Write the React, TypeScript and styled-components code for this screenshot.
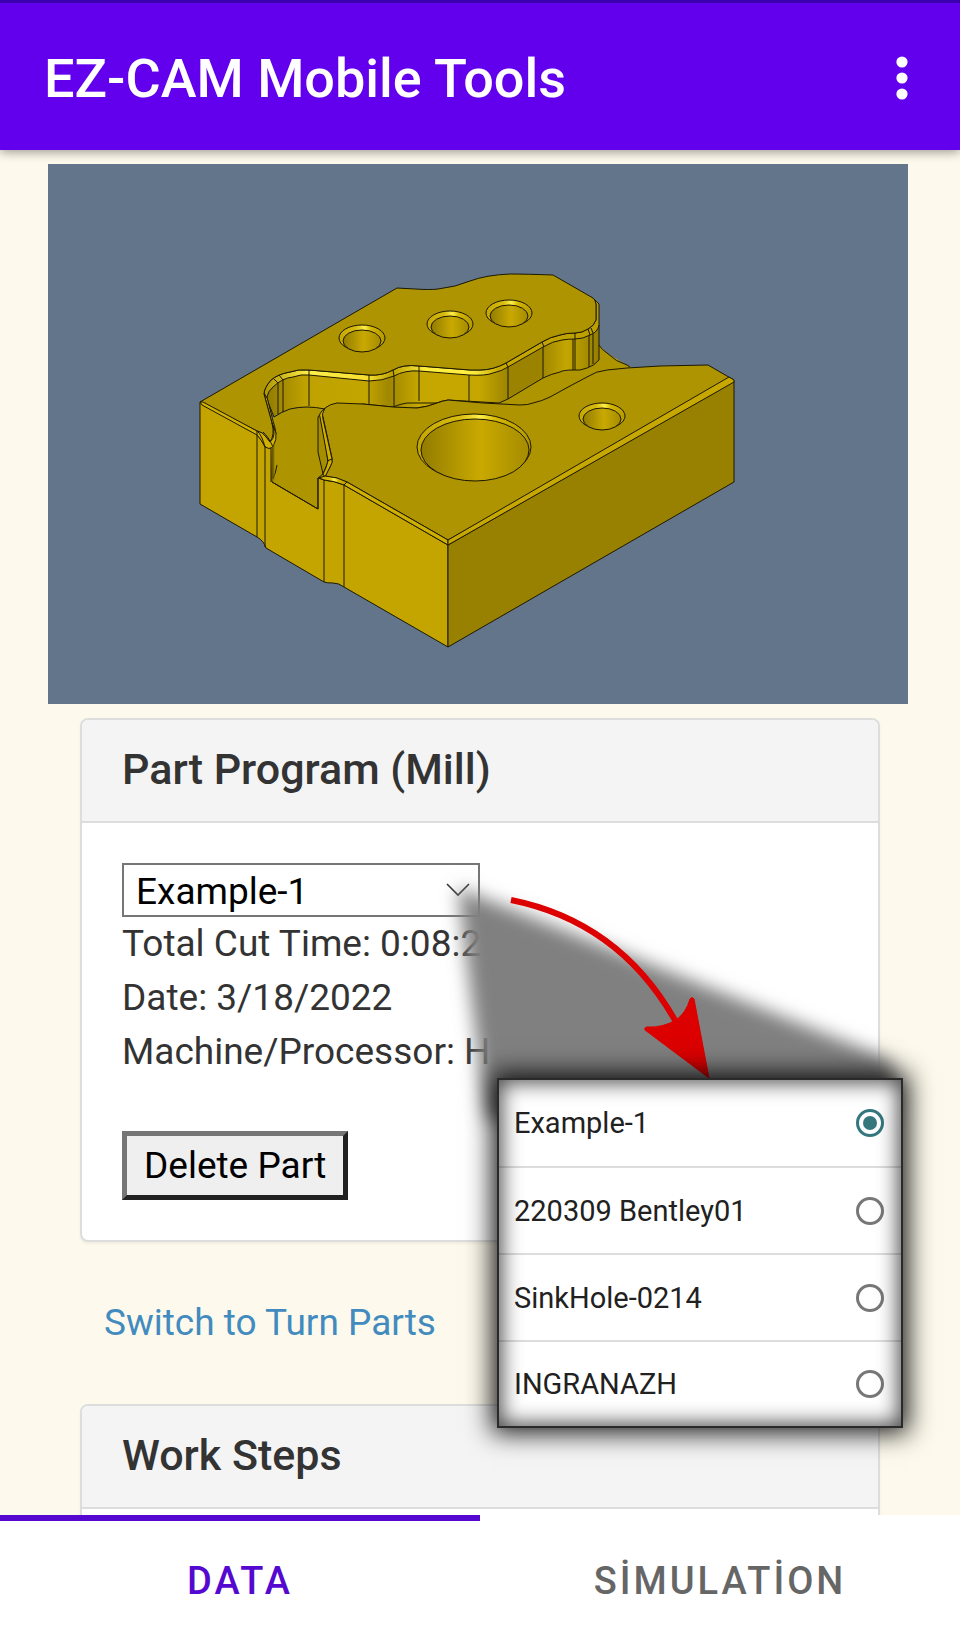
import React, { useState } from 'react';
import styled, { createGlobalStyle } from 'styled-components';

const GlobalStyle = createGlobalStyle`
  *, *::before, *::after { box-sizing: border-box; }
  body {
    margin: 0;
    background: #fdf9ec;
    color: #333;
    font-family: Roboto, "Liberation Sans", sans-serif;
    font-size: 37px;
    line-height: 54px;
  }
  button, select, input { font: inherit; margin: 0; }
`;

const Page = styled.div`
  display: flex;
  flex-direction: column;
  min-height: 100vh;
  overflow: hidden;
`;

const AppBar = styled.header`
  display: flex;
  align-items: center;
  justify-content: space-between;
  min-height: 150px;
  padding: 4px 44px 0;
  border-top: 3px solid #3a00b0;
  background: #6200ee;
  color: #fff;
  box-shadow: 0 2px 10px rgba(0, 0, 0, 0.4);
  z-index: 1;
`;

const AppTitle = styled.h1`
  margin: 0;
  font-size: 54px;
  font-weight: 500;
  line-height: 64px;
`;

const MenuButton = styled.button`
  display: flex;
  padding: 0 8px 0;
  border: 0;
  background: none;
  color: inherit;
`;

const Content = styled.main`
  flex: 1;
  display: flex;
  flex-direction: column;
  padding-top: 14px;
`;

const Viewport = styled.div`
  margin: 0 52px 14px 48px;
  background: #62758b;
  svg { display: block; width: 100%; height: auto; }
`;

const Card = styled.section<{ $open?: boolean }>`
  margin: 0 80px;
  border: 2px solid #ddd;
  border-radius: 8px;
  background: #fff;
  box-shadow: 0 2px 3px rgba(0, 0, 0, 0.05);
  ${p => p.$open && 'flex: 1; border-bottom: 0; border-radius: 8px 8px 0 0;'}
`;

const CardTitle = styled.h2`
  margin: 0;
  padding: 23px 40px 25px;
  border-bottom: 2px solid #ddd;
  border-radius: 6px 6px 0 0;
  background: #f4f4f4;
  font-size: 43px;
  font-weight: 500;
  line-height: 53px;
`;

const CardBody = styled.div`
  padding: 40px;
`;

const Field = styled.div`
  position: relative;
  width: 358px;
`;

const Select = styled.select`
  display: block;
  width: 100%;
  height: 54px;
  padding: 0 48px 0 12px;
  border: 2px solid #767676;
  border-radius: 0;
  background: #fff;
  color: #000;
  appearance: none;
`;

const Chevron = styled.svg`
  position: absolute;
  top: 20px;
  right: 10px;
  pointer-events: none;
`;

const Callout = styled.svg`
  position: absolute;
  top: -23px;
  left: 278px;
  pointer-events: none;
  z-index: 2;
`;

const Popup = styled.fieldset`
  position: absolute;
  top: 215px;
  left: 375px;
  width: 406px;
  margin: 0;
  padding: 0;
  border: 2px solid #2a2a2a;
  background: #fff;
  color: #212121;
  font-size: 29px;
  line-height: 36px;
  box-shadow: 0 0 24px 5px rgba(0, 0, 0, 0.9);
  z-index: 3;
  &::after {
    content: '';
    position: absolute;
    inset: 0;
    box-shadow: inset 0 0 20px 3px rgba(0, 0, 0, 0.7);
    pointer-events: none;
  }
`;

const Option = styled.label`
  display: flex;
  align-items: center;
  justify-content: space-between;
  height: 86px;
  padding: 0 17px 0 15px;
  & + & { height: 87px; border-top: 2px solid #ddd; }
  & + &:last-child { height: 86px; }
`;

const Radio = styled.input`
  width: 28px;
  height: 28px;
  border: 3px solid #777;
  border-radius: 50%;
  appearance: none;
  &:checked {
    border-color: #34787d;
    background: #34787d;
    background-clip: content-box;
    padding: 4px;
  }
`;

const Details = styled.p`
  margin: 0 0 52px;
  span { display: block; white-space: nowrap; }
`;

const DeleteButton = styled.button`
  display: block;
  height: 69px;
  padding: 0 17px;
  border: 5px solid;
  border-color: #767676 #212121 #212121 #767676;
  border-radius: 0;
  background: #efefef;
  color: #000;
`;

const SwitchLink = styled.a`
  align-self: flex-start;
  margin: 54px 104px 54px;
  color: #428bbf;
  text-decoration: none;
`;

const TabBar = styled.nav`
  display: flex;
  background: #fff;
  z-index: 1;
`;

const Tab = styled.button<{ $active?: boolean }>`
  flex: 1;
  height: 128px;
  padding: 0 0 2px;
  border: 0;
  border-top: 6px solid ${p => (p.$active ? '#5508d0' : 'transparent')};
  background: none;
  color: ${p => (p.$active ? '#5508d0' : '#666')};
  font-size: 38px;
  font-weight: 500;
  letter-spacing: 3px;
`;

const holes = [[362, 338], [450, 324], [509, 313], [602, 416]];

const PartModel = () => (
  <svg viewBox="48 164 860 540" role="img" aria-label="Milled part preview" stroke="#1d1800" strokeWidth="1" strokeLinejoin="round" fill="none">
    <defs>
      <linearGradient id="bore" x1="0" x2="1" y1="0" y2="0">
        <stop offset="0" stopColor="#927c00" />
        <stop offset="0.55" stopColor="#c9a900" />
        <stop offset="1" stopColor="#a58c00" />
      </linearGradient>
      <linearGradient id="rim" x1="0" x2="1" y1="0" y2="0">
        <stop offset="0" stopColor="#c4a600" />
        <stop offset="0.38" stopColor="#d9bc10" />
        <stop offset="0.55" stopColor="#fff04a" />
        <stop offset="0.7" stopColor="#d4b600" />
        <stop offset="1" stopColor="#b39900" />
      </linearGradient>
      <linearGradient id="wall" gradientUnits="userSpaceOnUse" x1="265" x2="600" y1="0" y2="0">
        <stop offset="0" stopColor="#8f7a00" />
        <stop offset="0.12" stopColor="#bfa100" />
        <stop offset="0.3" stopColor="#c4a600" />
        <stop offset="0.37" stopColor="#9f8700" />
        <stop offset="0.46" stopColor="#c5a700" />
        <stop offset="0.64" stopColor="#c5a700" />
        <stop offset="0.73" stopColor="#9b8300" />
        <stop offset="0.82" stopColor="#9b8300" />
        <stop offset="0.9" stopColor="#c4a600" />
        <stop offset="1" stopColor="#937d00" />
      </linearGradient>
      <linearGradient id="edge" gradientUnits="userSpaceOnUse" x1="265" x2="600" y1="0" y2="0">
        <stop offset="0" stopColor="#b09600" />
        <stop offset="0.13" stopColor="#fff04a" />
        <stop offset="0.31" stopColor="#f5de30" />
        <stop offset="0.38" stopColor="#bb9f00" />
        <stop offset="0.48" stopColor="#ffee40" />
        <stop offset="0.62" stopColor="#ffee40" />
        <stop offset="0.7" stopColor="#c6a800" />
        <stop offset="1" stopColor="#bb9f00" />
      </linearGradient>
    </defs>

    {/* channel floor */}
    <path fill="#ae9500" stroke="none" d="M272 418L290 409L325 405L400 380H540L599 345L607 353L627 365L640 372L600 400L480 420L335 480L318 509L272 482Z" />
    <path d="M599 345Q602 350 607 353Q616 362 627 365L630 367" />

    {/* island wall and chamfer */}
    <path fill="url(#wall)" d="M599 325V360Q594 366 587 368Q580 371 573 370Q563 370 560 372Q551 374 543 378L508 399L499 403L448 400Q441 401 437 403Q427 407 417 408Q401 409 393 407L363 404L325 409Q315 407 307 407Q298 407 290 409Q281 412 274 417L266 397L268 389L276 380L293 374L309 372L369 378L400 370L480 372L560 338Z" />
    <path d="M393 407Q400 404 407 403H437M278 383V414M283 380V412M309 375V406M369 381V404M394 376V406M419 371V401M469 375V402M508 367V399M543 347V378M573 339V370M575 339V370M589 335V367M593 333V364" />
    <path fill="url(#edge)" d="M596 320Q594 326 588 329Q582 333 575 333Q566 333 560 335Q550 337 542 342L506 363Q493 370 480 370H470L419 366Q403 364 393 370Q382 376 369 375L309 370Q298 369 290 372Q278 374 271 380Q264 388 264 394L272 423L276 434Q275 426 273 421L267 397Q268 391 273 387Q282 378 293 377Q301 374 309 375L369 381Q382 381 394 376Q405 370 419 371L469 375Q486 376 493 373Q502 371 508 367L543 347Q553 341 562 340Q568 339 575 339Q583 339 590 335Q598 332 599 325V304Q597 302 594 299L596 304Z" />

    {/* rear top face */}
    <path fill="#ad9400" d="M200 402L397 288L415 289Q430 290 438 289Q456 287 470 281Q486 275 510 274Q525 274 553 275L593 298Q595 299 596 304V320Q594 326 588 329Q582 333 575 333Q566 333 560 335Q550 337 542 342L506 363Q493 370 480 370H470L419 366Q403 364 393 370Q382 376 369 375L309 370Q298 369 290 372Q278 374 271 380Q264 388 264 394L272 423Q275 435 270 442L266 437Q263 432 257 431Z" />
    <path d="M506 363L508 367M542 342L544 347M575 333V339M588 329L590 335M591 328L593 333M309 370V375M393 370L394 376M369 375V381M419 366V371M273 378L278 383M279 375L283 380M264 393L267 398" />

    {/* left block */}
    <path fill="#c4a500" d="M200 402L257 434L265 446L272 448V482L318 509V478L324 480Q335 481 344 485L448 545V647L344 587Q339 583 333 583Q326 583 324 582L266 548Q264 541 257 537L200 504Z" />
    <path fill="#d1b100" d="M200 402L203 402L257 431Q263 432 266 437L270 442Q277 436 272 423L276 433Q277 439 273 447Q269 450 265 447Q262 440 257 435L202 405Z" />
    <path d="M257 431V537M265 446V547M271 448V482M273 445V478M257 431Q262 435 265 447M263 432Q268 436 273 447M277 465Q276 472 273 479" />
    <path fill="#8f7a00" fillOpacity="0.5" stroke="none" d="M271 448L275 443V480L272 482Z" />

    {/* front top face */}
    <path fill="#ad9400" d="M323 417Q319 413 325 408Q330 404 337 403L363 404L393 407L417 408Q427 407 437 403Q442 401 448 400L483 403L520 405Q528 405 533 403Q542 401 550 397L570 386L587 377Q596 371 607 370L627 368L660 366L708 365L727 376L734 380L448 540L347 482Q337 477 325 476L330 467Q333 462 332 458Z" />
    <path fill="#a58d00" d="M318 417L321 413L323 427L328 462L323 474L318 452Z" />
    <path fill="#cfaf00" d="M325 408Q318 414 320 417L328 461Q326 469 323 474L325 477L330 467Q333 462 332 459L323 419Q321 414 325 408ZM327 461L332 459" />
    <path d="M323 474L318 478V509L272 482" />

    {/* outer chamfers and right face */}
    <path fill="#cfaf00" d="M347 482L448 540V545L344 485Z" />
    <path fill="url(#rim)" d="M319 478L325 476Q338 477 347 482L344 485Q335 481 324 480Z" />
    <path fill="#988000" d="M448 545L734 381V482L448 647Z" />
    <path fill="#c6a800" d="M448 540L729 377L734 380V382L448 545Z" />
    <path d="M324 480V582M344 485V587" />

    {/* drilled holes */}
    {holes.map(([x, y]) => (
      <g key={x}>
        <ellipse cx={x} cy={y} rx="23" ry="13" fill="url(#rim)" />
        <ellipse cx={x} cy={y + 3} rx="19" ry="11" fill="url(#bore)" />
      </g>
    ))}
    <ellipse cx="474" cy="447" rx="57" ry="33" fill="url(#rim)" />
    <ellipse cx="475" cy="450" rx="54" ry="31" fill="url(#bore)" />
  </svg>
);

const programs = ['Example-1', '220309 Bentley01', 'SinkHole-0214', 'INGRANAZH'];

export default function App() {
  const [program, setProgram] = useState(programs[0]);

  return (
    <>
      <GlobalStyle />
      <Page>
        <AppBar>
          <AppTitle>EZ-CAM Mobile Tools</AppTitle>
          <MenuButton aria-label="More options">
            <svg width="12" height="46" viewBox="0 0 12 46" fill="currentColor">
              <circle cx="6" cy="6" r="5.6" />
              <circle cx="6" cy="22" r="5.6" />
              <circle cx="6" cy="38" r="5.6" />
            </svg>
          </MenuButton>
        </AppBar>
        <Content>
          <Viewport>
            <PartModel />
          </Viewport>
          <Card>
            <CardTitle>Part Program (Mill)</CardTitle>
            <CardBody>
              <Field>
                <Select aria-label="Part program" value={program} onChange={e => setProgram(e.target.value)}>
                  {programs.map(name => <option key={name}>{name}</option>)}
                </Select>
                <Chevron width="24" height="14" viewBox="0 0 24 14" fill="none" stroke="#333" strokeWidth="1.6">
                  <path d="M1 1L12 12L23 1" />
                </Chevron>
                <Callout width="540" height="360" viewBox="400 840 540 360">
                  <defs>
                    <filter id="soft" x="-20%" y="-30%" width="140%" height="160%">
                      <feGaussianBlur stdDeviation="9" />
                    </filter>
                  </defs>
                  <path d="M458 888L892 1060V1120H486Z" fill="#808080" filter="url(#soft)" />
                  <path d="M511 900Q620 922 676 1022" fill="none" stroke="#dc0000" strokeWidth="6" />
                  <path d="M709 1078L645 1030Q644 1027 647 1027Q662 1028 676 1020Q686 1013 690 999Q692 996 694 999Z" fill="#dc0000" stroke="#dc0000" strokeWidth="1" />
                </Callout>
                <Popup aria-label="Choose part program">
                  {programs.map(name => (
                    <Option key={name}>
                      {name}
                      <Radio type="radio" name="program" checked={program === name} onChange={() => setProgram(name)} />
                    </Option>
                  ))}
                </Popup>
              </Field>
              <Details>
                <span>Total Cut Time: 0:08:2</span>
                <span>Date: 3/18/2022</span>
                <span>Machine/Processor: H</span>
              </Details>
              <DeleteButton>Delete Part</DeleteButton>
            </CardBody>
          </Card>
          <SwitchLink href="#turn">Switch to Turn Parts</SwitchLink>
          <Card $open>
            <CardTitle>Work Steps</CardTitle>
          </Card>
        </Content>
        <TabBar>
          <Tab $active>DATA</Tab>
          <Tab>SİMULATİON</Tab>
        </TabBar>
      </Page>
    </>
  );
}
